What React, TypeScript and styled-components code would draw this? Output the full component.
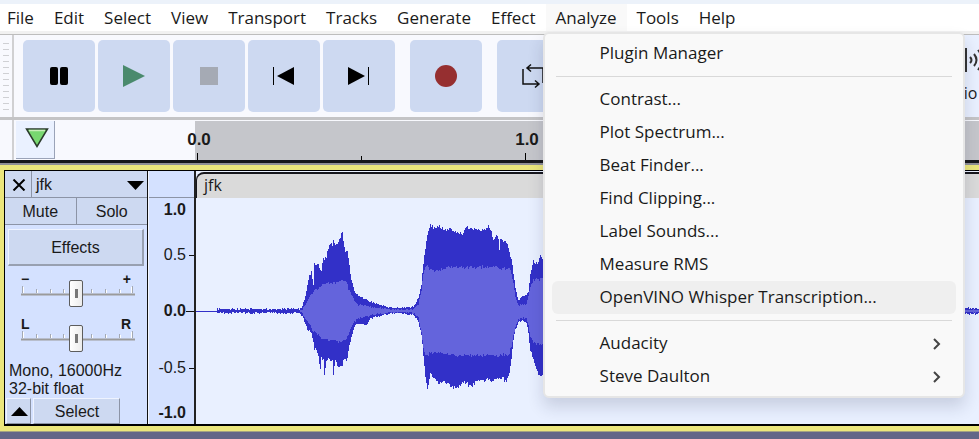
import React from "react";
import styled, { createGlobalStyle, css } from "styled-components";

const uiFont = `"Open Sans", "Noto Sans", sans-serif`;
const trackFont = `"Liberation Sans", Arial, sans-serif`;

const GlobalStyle = createGlobalStyle`
  * { box-sizing: border-box; }
  body { margin: 0; background: #636688; overflow: hidden; }
  button { font: inherit; color: inherit; border: 0; padding: 0; margin: 0; background: none; }
`;

const Window = styled.div`
  min-height: 100vh;
  background: #636688;
  color: #1a1a1a;
  font: 17px/20px ${uiFont};
`;

/* ---------- menu bar ---------- */

const TitleStrip = styled.div`
  height: 4px;
  background: #ecf2fa;
`;

const MenuBar = styled.nav`
  display: flex;
  height: 30px;
  background: #fff;
  border-bottom: 3px solid #f1f1f1;
`;

const MenuSlot = styled.div`
  position: relative;
  display: flex;
`;

const MenuTitle = styled.button<{ $open?: boolean }>`
  padding: 0 10px;
  line-height: 28px;
  white-space: nowrap;
  background: ${(p) => (p.$open ? "#f9f9f9" : "transparent")};

  ${MenuBar} > &:first-child { padding-left: 7px; }
`;

const Popup = styled.div`
  position: absolute;
  z-index: 2;
  top: 28px;
  left: -3px;
  width: 422px;
  padding: 3px 0;
  background: #f9f9f9;
  border: 2px solid #e6e6e6;
  border-radius: 6px;
  box-shadow: 0 9px 16px rgba(30, 40, 70, 0.16);
`;

const MenuItem = styled.button<{ $active?: boolean }>`
  display: flex;
  align-items: center;
  justify-content: space-between;
  width: calc(100% - 14px);
  height: 33px;
  margin: 0 7px;
  padding: 0 14px 2px 48px;
  border-radius: 6px;
  text-align: left;
  white-space: nowrap;
  background: ${(p) => (p.$active ? "#efefef" : "transparent")};
`;

const Separator = styled.hr`
  height: 1px;
  margin: 6px 11px;
  border: 0;
  background: #d9d9d9;
`;

/* ---------- toolbar ---------- */

const Toolbar = styled.div`
  display: flex;
  height: 86px;
  overflow: hidden;
  background: #f8f9fe;
  border-top: 1px solid #bdbdbd;
  border-bottom: 3px solid #c4c4c6;
`;

const Grip = styled.div<{ $lines?: boolean }>`
  flex: none;
  width: 14px;
  border-right: 2px solid #d0d0d2;
  ${(p) =>
    p.$lines &&
    css`
      &::before {
        content: "";
        display: block;
        width: 6px;
        height: 68px;
        margin: 8px 0 0 3px;
        background: repeating-linear-gradient(#cfd0d4 0 1px, transparent 1px 6px);
      }
    `}
`;

const Transport = styled.div`
  display: flex;
  flex: none;
  gap: 3px;
  padding: 5px 0 0 9px;
`;

const ToolButton = styled.button<{ $apart?: boolean }>`
  display: grid;
  place-items: center;
  width: 72px;
  height: 72px;
  margin-left: ${(p) => (p.$apart ? "12px" : "0")};
  border-radius: 5px;
  background: #cdd9f1;
`;

const AudioSetup = styled.button`
  display: flex;
  flex: none;
  flex-direction: column;
  align-items: flex-start;
  gap: 9px;
  width: 120px;
  margin-left: 353px;
  padding: 13px 12px 0;
  font-size: 16px;
  line-height: 24px;
  white-space: nowrap;
  background: #e9f0ff;
`;

/* ---------- timeline ---------- */

const Timeline = styled.div`
  display: flex;
  height: 43px;
  overflow: hidden;
  background: #f8f9fe;
  border-bottom: 3px solid #17171b;
`;

const PinButton = styled.button`
  display: grid;
  place-items: center;
  flex: none;
  width: 39px;
  height: 38px;
  margin: 1px 0 0 2px;
  padding: 0 0 4px 3px;
  background: #eaf1ff;
  border-right: 1px solid #9aa3b8;
  border-bottom: 1px solid #9aa3b8;
`;

const Ruler = styled.div`
  display: flex;
  flex: 1;
  min-width: 0;
  margin: 1px 0 0 140px;
  background: #c5c6cb;
`;

const RulerCell = styled.div`
  display: flex;
  flex: none;
  flex-direction: column;
  justify-content: space-between;
  width: 164px;
  font: bold 17px/20px ${trackFont};
`;

const RulerLabel = styled.span`
  width: 30px;
  margin: 9px 0 0 -11px;
  text-align: center;
`;

const RulerTick = styled.i<{ $major?: boolean }>`
  width: 1px;
  height: ${(p) => (p.$major ? 7 : 4)}px;
  margin: auto 0 0 2px;
  background: #000;
`;

/* ---------- track ---------- */

const TrackFrame = styled.section`
  border-top: 2px solid #8f8f96;
  border-bottom: 1px solid #a3a284;
  font: 16px/18px ${trackFont};
`;

const TrackBody = styled.div`
  display: flex;
  border: solid #ebe67c;
  border-width: 5px 0 5px 4px;
`;

const Columns = styled.div`
  display: flex;
  flex: 1;
  min-width: 0;
  border: solid #000;
  border-width: 1px 0 2px 1px;
`;

const Panel = styled.div`
  flex: none;
  width: 143px;
  background: #d4e1ff;
  border-right: 1px solid #111;
`;

const PanelRow = styled.div`
  display: flex;
  height: 27px;
  background: #cdd9f1;
  border-bottom: 1px solid #8c94a6;
`;

const CloseButton = styled.button`
  display: grid;
  place-items: center;
  width: 27px;
  padding: 2px 0 0 2px;
  border-right: 1px solid #8c94a6;
`;

const NameButton = styled.button`
  display: flex;
  flex: 1;
  align-items: center;
  justify-content: space-between;
  padding: 2px 3px 0 4px;
`;

const ToggleButton = styled.button`
  flex: 1;
  padding-top: 1px;
  & + & { border-left: 1px solid #8c94a6; }
`;

const EffectsButton = styled.button`
  display: block;
  width: 136px;
  height: 37px;
  margin: 4px 0 0 3px;
  padding-top: 1px;
  background: #cdd9f1;
  border: solid;
  border-width: 1px 2px 2px 1px;
  border-color: #eef3ff #98a0b0 #98a0b0 #eef3ff;
`;

const SliderBox = styled.label`
  display: grid;
  grid-template-columns: 1fr 1fr;
  width: 114px;
  height: 37px;
  margin: 4px 0 8px 16px;
  font-weight: bold;
  font-size: 14px;

  svg { grid-area: 1 / 1 / 2 / 3; align-self: end; }
`;

const SliderEnd = styled.span<{ $high?: boolean }>`
  grid-row: 1;
  grid-column: ${(p) => (p.$high ? 2 : 1)};
  justify-self: ${(p) => (p.$high ? "end" : "start")};
  padding-right: 4px;
`;

const Range = styled.input`
  grid-area: 1 / 1 / 2 / 3;
  align-self: end;
  width: 110px;
  height: 27px;
  margin: 0;
  background: none;
  appearance: none;

  &::-webkit-slider-thumb {
    appearance: none;
    width: 14px;
    height: 27px;
    border: 1px solid #5d5d5d;
    border-radius: 2px;
    background:
      linear-gradient(#777, #777) center / 3px 9px no-repeat,
      linear-gradient(90deg, #fff, #ececec);
  }
`;

const Info = styled.p`
  margin: 10px 0 0 4px;
  white-space: nowrap;
`;

const FooterRow = styled.div`
  display: flex;
  gap: 2px;
  padding-left: 1px;
`;

const FooterButton = styled.button<{ $wide?: boolean }>`
  display: grid;
  place-items: center;
  width: ${(p) => (p.$wide ? 87 : 25)}px;
  height: 26px;
  padding: 1px 0 0 1px;
  background: #cdd9f1;
  border: solid;
  border-width: 1px;
  border-color: #eef3ff #8c94a6 #8c94a6 #eef3ff;
`;

const Scale = styled.div`
  display: grid;
  flex: none;
  grid-template-rows: 27px 24px 66px 46px 68px 1fr;
  width: 48px;
  background: #d4e1ff;
  border-left: 1px solid #f4f7ff;
  border-right: 2px solid #222;
`;

const ScaleHead = styled.div`
  border-bottom: 1px solid #8c94a6;
`;

const ScaleMark = styled.div<{ $bold?: boolean; $tick: number }>`
  display: grid;
  grid-template-columns: 37px 1fr;
  align-items: center;
  justify-items: end;
  font-weight: ${(p) => (p.$bold ? "bold" : "normal")};

  &::after {
    content: "";
    width: ${(p) => p.$tick}px;
    height: 1px;
    background: #111;
  }
`;

const Clip = styled.div`
  flex: 1;
  min-width: 0;
  overflow: hidden;
  padding-top: 1px;
  background: #e9f0ff;

  svg { display: block; }
`;

const ClipTitle = styled.div`
  height: 26px;
  padding-left: 7px;
  border-top: 2px solid #16161c;
  border-left: 1px solid #16161c;
  border-top-left-radius: 8px;
  background: #dadada;
  font: 16px/22px ${uiFont};
`;

/* ---------- waveform ---------- */

// x, upper peak, lower peak, upper RMS, lower RMS (distances from the centre line)
const envelope: number[][] = [
  [0, 0, 0, 0, 0], [20, 0, 0, 0, 0], [21, 2, 2, 0, 0], [103, 2, 2, 0, 0],
  [105, 3, 4, 1, 1], [109, 14, 12, 6, 7], [111, 27, 20, 10, 11], [113, 36, 20, 14, 13],
  [115, 41, 22, 17, 17], [117, 28, 32, 19, 20], [118, 48, 39, 21, 21], [120, 46, 38, 22, 23],
  [122, 48, 47, 23, 24], [124, 41, 58, 24, 26], [125, 40, 47, 25, 27], [127, 54, 50, 28, 29],
  [128, 52, 64, 28, 29], [130, 55, 50, 28, 29], [132, 63, 48, 28, 29], [134, 69, 50, 28, 29],
  [136, 64, 50, 28, 29], [137, 72, 63, 28, 29], [139, 68, 50, 28, 29], [142, 68, 57, 30, 31],
  [144, 75, 57, 31, 31], [146, 80, 55, 32, 31], [147, 71, 50, 31, 31], [149, 60, 49, 31, 29],
  [151, 61, 49, 27, 26], [153, 46, 34, 20, 21], [155, 31, 26, 16, 16], [158, 20, 15, 11, 11],
  [162, 15, 12, 6, 7], [169, 12, 14, 6, 6], [174, 9, 8, 4, 4], [182, 7, 5, 3, 3],
  [192, 4, 3, 2, 2], [205, 3, 2, 1, 1], [217, 4, 4, 2, 2], [222, 13, 10, 6, 6],
  [225, 27, 25, 22, 22], [227, 48, 46, 38, 38], [229, 63, 67, 44, 45], [231, 77, 79, 46, 46],
  [234, 88, 62, 41, 42], [237, 84, 66, 40, 42], [242, 86, 73, 41, 42], [247, 82, 71, 43, 43],
  [254, 82, 75, 44, 44], [261, 79, 77, 44, 45], [266, 77, 72, 44, 45], [270, 84, 72, 43, 45],
  [275, 83, 76, 44, 45], [281, 82, 70, 44, 45], [287, 81, 70, 44, 45], [292, 85, 69, 44, 45],
  [295, 80, 71, 44, 45], [297, 70, 70, 44, 45], [301, 77, 69, 44, 45], [303, 63, 66, 43, 44],
  [304, 72, 67, 43, 44], [310, 70, 71, 43, 44], [313, 59, 61, 43, 44], [315, 52, 49, 38, 36],
  [317, 38, 30, 27, 24], [319, 23, 19, 14, 15], [322, 10, 11, 6, 8], [326, 15, 10, 6, 7],
  [330, 16, 12, 7, 7], [332, 18, 22, 14, 14], [334, 38, 40, 24, 26], [337, 50, 48, 31, 32],
  [341, 48, 62, 32, 33], [344, 55, 67, 33, 33], [347, 50, 64, 34, 33],
  [380, 58, 60, 32, 32], [430, 30, 30, 15, 15], [500, 50, 48, 26, 26], [600, 12, 12, 6, 6],
  [740, 3, 3, 1, 1], [1000, 3, 3, 1, 1], [1400, 20, 20, 9, 9], [2000, 3, 3, 1, 1],
];

const noise = (n: number) => {
  const s = Math.sin(n * 127.1 + 11.7) * 43758.5453;
  return s - Math.floor(s);
};

const sample = (x: number, column: number) => {
  const i = Math.max(1, envelope.findIndex((p) => p[0] >= x));
  const a = envelope[i - 1];
  const b = envelope[i];
  return a[column] + ((b[column] - a[column]) * (x - a[0])) / (b[0] - a[0]);
};

const WAVE_WIDTH = 2000;
const CENTRE = 113;

// `dip` is how far single columns fall short of the envelope
const outline = (upper: number, lower: number, dip: number, rest: number) => {
  const reach = (x: number, column: number) => {
    const v = sample(x, column);
    if (v < 0.5) return rest;
    const n = noise(x * 7 + column * 131);
    const jitter = (n - 0.5) * Math.min(4, 1.5 + v * 0.05);
    const drop = v > 20 && n > 0.75 ? dip * noise(x + 3) : 0;
    return Math.max(1, Math.round(v + jitter - drop));
  };
  let top = "";
  let bottom = "";
  for (let x = 0; x < WAVE_WIDTH; x++) {
    top += `V${CENTRE - reach(x, upper)}H${x + 1}`;
    const back = WAVE_WIDTH - 1 - x;
    bottom += `V${CENTRE + reach(back, lower)}H${back}`;
  }
  return `M0 ${CENTRE}${top}${bottom}Z`;
};

const peakPath = outline(1, 2, 4, 0);
const rmsPath = outline(3, 4, 4, 0);

const Waveform = () => (
  <svg width={WAVE_WIDTH} height="226" role="img" aria-label="jfk waveform" shapeRendering="crispEdges">
    <path d={`M0 ${CENTRE}h22v1h-22z`} fill="#3230c8" />
    <path d={peakPath} fill="#3230c8" />
    <path d={rmsPath} fill="#6464dc" />
  </svg>
);

/* ---------- small drawings ---------- */

const Glyph = ({ children }: { children: React.ReactNode }) => (
  <svg width="24" height="24" viewBox="0 0 24 24" aria-hidden="true">
    {children}
  </svg>
);

const Chevron = () => (
  <svg width="10" height="14" viewBox="0 0 10 14" fill="none" stroke="#444" strokeWidth="2" aria-hidden="true">
    <path d="M2 3l5 5-5 5" />
  </svg>
);

const SliderScale = () => (
  <svg width="114" height="27" viewBox="0 0 114 27" aria-hidden="true">
    <path d="M0 14.5H114" stroke="#9b9b9b" strokeWidth="2" />
    <path
      d="M1.5 6V13M15.5 9V13M29.5 9V13M42.5 9V13M70.5 9V13M84.5 9V13M98.5 9V13M111.5 6V13"
      stroke="#a4a9b2"
    />
    <path
      d="M2.5 7V13M16.5 10V13M30.5 10V13M43.5 10V13M71.5 10V13M85.5 10V13M99.5 10V13M110.5 7V13"
      stroke="#fff"
    />
  </svg>
);

const Slider = ({ name, low, high }: { name: string; low: string; high: string }) => (
  <SliderBox>
    <SliderEnd>{low}</SliderEnd>
    <SliderEnd $high>{high}</SliderEnd>
    <SliderScale />
    <Range type="range" min={0} max={100} defaultValue={50} aria-label={name} />
  </SliderBox>
);

/* ---------- content ---------- */

const menusBefore = ["File", "Edit", "Select", "View", "Transport", "Tracks", "Generate", "Effect"];
const menusAfter = ["Tools", "Help"];
const tools = [
  "Contrast...",
  "Plot Spectrum...",
  "Beat Finder...",
  "Find Clipping...",
  "Label Sounds...",
  "Measure RMS",
  "OpenVINO Whisper Transcription...",
];
const groups = ["Audacity", "Steve Daulton"];
const seconds = ["0.0", "1.0", "2.0"];

const AnalyzeMenu = () => (
  <Popup role="menu" aria-label="Analyze">
    <MenuItem role="menuitem">Plugin Manager</MenuItem>
    <Separator />
    {tools.map((t) => (
      <MenuItem key={t} role="menuitem" $active={t.startsWith("OpenVINO")}>
        {t}
      </MenuItem>
    ))}
    <Separator />
    {groups.map((g) => (
      <MenuItem key={g} role="menuitem" aria-haspopup="menu">
        {g}
        <Chevron />
      </MenuItem>
    ))}
  </Popup>
);

export default function App() {
  return (
    <Window>
      <GlobalStyle />
      <TitleStrip />
      <MenuBar>
        {menusBefore.map((m) => (
          <MenuTitle key={m}>{m}</MenuTitle>
        ))}
        <MenuSlot>
          <MenuTitle $open aria-expanded="true">Analyze</MenuTitle>
          <AnalyzeMenu />
        </MenuSlot>
        {menusAfter.map((m) => (
          <MenuTitle key={m}>{m}</MenuTitle>
        ))}
      </MenuBar>

      <Toolbar>
        <Grip $lines />
        <Transport>
          <ToolButton aria-label="Pause">
            <Glyph>
              <rect x="3" y="3" width="8" height="18" rx="2" />
              <rect x="13" y="3" width="8" height="18" rx="2" />
            </Glyph>
          </ToolButton>
          <ToolButton aria-label="Play">
            <Glyph>
              <path d="M1 1L23 12L1 23Z" fill="#4a8a6d" />
            </Glyph>
          </ToolButton>
          <ToolButton aria-label="Stop">
            <Glyph>
              <rect x="3" y="3" width="18" height="18" fill="#a5aab4" />
            </Glyph>
          </ToolButton>
          <ToolButton aria-label="Skip to start">
            <Glyph>
              <path d="M22 3V21L5 12Z" />
              <rect x="1" y="3" width="1" height="18" />
            </Glyph>
          </ToolButton>
          <ToolButton aria-label="Skip to end">
            <Glyph>
              <path d="M1 3V21L18 12Z" />
              <rect x="21" y="3" width="1" height="18" />
            </Glyph>
          </ToolButton>
          <ToolButton $apart aria-label="Record">
            <Glyph>
              <circle cx="12" cy="12" r="11" fill="#962f30" />
            </Glyph>
          </ToolButton>
          <ToolButton $apart aria-label="Loop">
            <svg width="24" height="26" viewBox="0 0 24 26" fill="none" stroke="#111" strokeWidth="1.5" aria-hidden="true">
              <path d="M2 6V21H17M14 17.500L18 21L14 24.500M22 20V5H7M10 1.500L6 5L10 8.500" />
            </svg>
          </ToolButton>
        </Transport>
        <AudioSetup>
          <svg width="54" height="24" viewBox="0 0 54 24" fill="none" stroke="#333" strokeWidth="2" aria-hidden="true">
            <rect x="15" y="1" width="17" height="22" />
            <circle cx="23" cy="15" r="4" />
            <path d="M36 9q3 3 0 6M40 6q5 6 0 12M44 2q8 10 0 20" />
          </svg>
          Audio Setup
        </AudioSetup>
      </Toolbar>

      <Timeline>
        <Grip />
        <PinButton aria-label="Timeline options">
          <svg width="24" height="20" viewBox="0 0 24 20" aria-hidden="true">
            <path d="M1.500 1H22.500L12 18.500Z" fill="#78d870" stroke="#2b3a2b" strokeWidth="1.500" />
            <path d="M4 2.500H20" stroke="#c8efb8" strokeWidth="1.500" />
          </svg>
        </PinButton>
        <Ruler>
          {seconds.map((s) => (
            <React.Fragment key={s}>
              <RulerCell>
                <RulerLabel>{s}</RulerLabel>
                <RulerTick $major />
              </RulerCell>
              <RulerCell>
                <RulerTick />
              </RulerCell>
            </React.Fragment>
          ))}
        </Ruler>
      </Timeline>

      <TrackFrame>
        <TrackBody>
          <Columns>
            <Panel>
              <PanelRow>
                <CloseButton aria-label="Close track">
                  <svg width="14" height="12" viewBox="0 0 14 12" stroke="#000" strokeWidth="2" aria-hidden="true">
                    <path d="M1.500 0.500L12.500 11.500M12.500 0.500L1.500 11.500" />
                  </svg>
                </CloseButton>
                <NameButton aria-haspopup="menu">
                  jfk
                  <svg width="17" height="9" viewBox="0 0 17 9" aria-hidden="true">
                    <path d="M0 0H17L8.500 9Z" />
                  </svg>
                </NameButton>
              </PanelRow>
              <PanelRow>
                <ToggleButton aria-pressed="false">Mute</ToggleButton>
                <ToggleButton aria-pressed="false">Solo</ToggleButton>
              </PanelRow>
              <EffectsButton>Effects</EffectsButton>
              <Slider name="Gain" low="−" high="+" />
              <Slider name="Pan" low="L" high="R" />
              <Info>
                Mono, 16000Hz
                <br />
                32-bit float
              </Info>
              <FooterRow>
                <FooterButton aria-label="Collapse track">
                  <svg width="17" height="9" viewBox="0 0 17 9" aria-hidden="true">
                    <path d="M0 9H17L8.500 0Z" />
                  </svg>
                </FooterButton>
                <FooterButton $wide>Select</FooterButton>
              </FooterRow>
            </Panel>
            <Scale>
              <ScaleHead />
              <ScaleMark $bold $tick={0}>1.0</ScaleMark>
              <ScaleMark $tick={5}>0.5</ScaleMark>
              <ScaleMark $bold $tick={8}>0.0</ScaleMark>
              <ScaleMark $tick={5}>-0.5</ScaleMark>
              <ScaleMark $bold $tick={0}>-1.0</ScaleMark>
            </Scale>
            <Clip>
              <ClipTitle>jfk</ClipTitle>
              <Waveform />
            </Clip>
          </Columns>
        </TrackBody>
      </TrackFrame>
    </Window>
  );
}
